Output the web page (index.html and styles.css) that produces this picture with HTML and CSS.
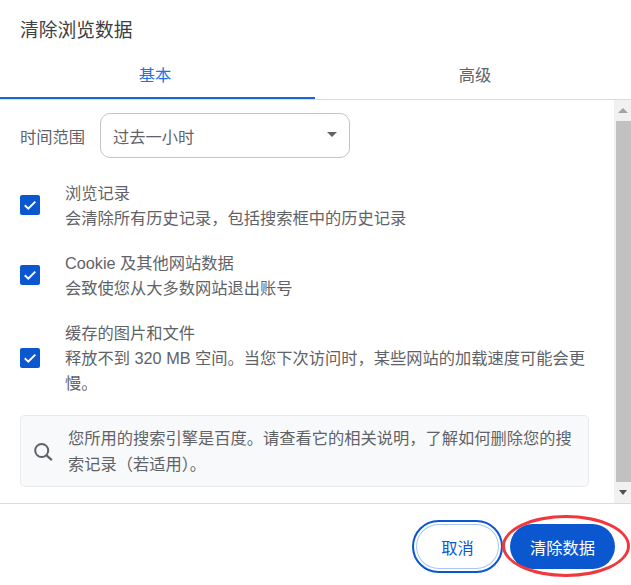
FILE: index.html
```html
<!DOCTYPE html>
<html lang="zh-CN">
<head>
    <meta charset="UTF-8">
    <title>清除浏览数据</title>
    <link rel="stylesheet" href="styles.css">
</head>
<body>
    <div class="dialog">
        <h1 class="title">清除浏览数据</h1>
        <div class="tabs">
            <div class="tab tab-active">基本</div>
            <div class="tab tab-other">高级</div>
        </div>
        <div class="middle">
            <div class="content">
                <div class="range-row">
                    <span class="range-label">时间范围</span>
                    <div class="select">
                        <span>过去一小时</span>
                        <span class="select-arrow"></span>
                    </div>
                </div>
                <div class="check-row">
                    <span class="checkbox">
                        <svg viewBox="0 0 20 20" width="20" height="20"><path d="M4.8 10.2l3.5 3.4 7-7" fill="none" stroke="#fff" stroke-width="2"/></svg>
                    </span>
                    <div class="check-text">
                        <div>浏览记录</div>
                        <div>会清除所有历史记录，包括搜索框中的历史记录</div>
                    </div>
                </div>
                <div class="check-row">
                    <span class="checkbox">
                        <svg viewBox="0 0 20 20" width="20" height="20"><path d="M4.8 10.2l3.5 3.4 7-7" fill="none" stroke="#fff" stroke-width="2"/></svg>
                    </span>
                    <div class="check-text">
                        <div>Cookie 及其他网站数据</div>
                        <div>会致使您从大多数网站退出账号</div>
                    </div>
                </div>
                <div class="check-row">
                    <span class="checkbox">
                        <svg viewBox="0 0 20 20" width="20" height="20"><path d="M4.8 10.2l3.5 3.4 7-7" fill="none" stroke="#fff" stroke-width="2"/></svg>
                    </span>
                    <div class="check-text">
                        <div>缓存的图片和文件</div>
                        <div>释放不到 320 MB 空间。当您下次访问时，某些网站的加载速度可能会更慢。</div>
                    </div>
                </div>
                <div class="notice">
                    <svg class="notice-icon" viewBox="0 0 24 24" width="24" height="24"><circle cx="9.7" cy="11.5" r="6.5" fill="none" stroke="#5f6368" stroke-width="2"/><path d="M14.3 16.1l5.5 5" stroke="#5f6368" stroke-width="2.2"/></svg>
                    <p class="notice-text">您所用的搜索引擎是百度。请查看它的相关说明，了解如何删除您的搜索记录（若适用）。</p>
                </div>
            </div>
            <div class="scrollbar">
                <div class="scroll-btn"><span class="arrow-up"></span></div>
                <div class="scroll-track"><div class="scroll-thumb"></div></div>
                <div class="scroll-btn"><span class="arrow-down"></span></div>
            </div>
        </div>
        <div class="footer">
            <button class="btn btn-cancel">取消</button>
            <button class="btn btn-clear">清除数据</button>
            <span class="red-circle"></span>
        </div>
    </div>
</body>
</html>
```

FILE: styles.css
```css
html, body {
    margin: 0;
    padding: 0;
    background: #fff;
}
body {
    font-family: "Liberation Sans", "Noto Sans CJK SC", sans-serif;
    color: #5f6368;
    font-size: 16.25px;
}
.dialog {
    width: 631px;
    height: 585px;
    display: flex;
    flex-direction: column;
    overflow: hidden;
}
.title {
    margin: 0;
    padding: 18px 20px 0;
    height: 40px;
    box-sizing: content-box;
    font-size: 18.75px;
    line-height: 25px;
    font-weight: 400;
    color: #3c4043;
}
.tabs {
    display: flex;
    height: 41px;
    border-bottom: 1px solid #dadce0;
    box-sizing: content-box;
}
.tab {
    flex: 1;
    text-align: center;
    line-height: 35px;
    color: #5f6368;
}
.tab-active {
    color: #1a73e8;
    border-bottom: 2px solid #1a66d8;
    height: 39px;
    flex: 0 0 310px;
    padding-right: 5px;
}
.tab-other {
    padding-left: 4px;
}
.middle {
    display: flex;
    height: 403px;
}
.content {
    flex: 1;
    padding: 13px 25px 0 20px;
    min-width: 0;
}
.range-row {
    display: flex;
    align-items: center;
    gap: 15px;
}
.select {
    width: 250px;
    height: 45px;
    box-sizing: border-box;
    border: 1px solid #c4c4c4;
    border-radius: 10px;
    padding: 0 12px;
    display: flex;
    align-items: center;
    justify-content: space-between;
}
.select-arrow {
    width: 0;
    height: 0;
    border-left: 5px solid transparent;
    border-right: 5px solid transparent;
    border-top: 5px solid #5f6368;
    margin-top: -3px;
}
.check-row {
    display: flex;
    align-items: center;
    gap: 25px;
    margin-top: 20px;
}
.range-row + .check-row {
    margin-top: 23px;
}
.checkbox {
    flex: none;
    width: 20px;
    height: 20px;
    margin-bottom: 2px;
    border-radius: 2px;
    background: #0b57d0;
    display: flex;
}
.check-text {
    line-height: 25px;
}
.notice {
    margin-top: 19px;
    width: 569px;
    height: 72px;
    box-sizing: border-box;
    background: #f8f9fa;
    border: 1px solid #e8eaed;
    border-radius: 5px;
    display: flex;
    align-items: center;
    padding: 0 10px 0 11px;
    gap: 12px;
}
.notice-icon {
    flex: none;
}
.notice-text {
    margin: 0;
    line-height: 26px;
}
.scrollbar {
    flex: none;
    width: 17px;
    display: flex;
    flex-direction: column;
    background: #f1f1f1;
}
.scroll-btn {
    height: 21px;
    display: flex;
    align-items: center;
    justify-content: center;
}
.arrow-up {
    border-left: 5px solid transparent;
    border-right: 5px solid transparent;
    border-bottom: 5px solid #a3a3a3;
}
.arrow-down {
    border-left: 4.5px solid transparent;
    border-right: 4.5px solid transparent;
    border-top: 5px solid #505050;
}
.scroll-track {
    flex: 1;
    padding: 0 0 0 2px;
}
.scroll-thumb {
    height: 100%;
    background: #c1c1c1;
}
.footer {
    position: relative;
    flex: 1;
    border-top: 1px solid #dadce0;
    display: flex;
    justify-content: flex-end;
    align-items: center;
    padding: 4px 16px 0 0;
    gap: 7px;
}
.btn {
    font: inherit;
    cursor: pointer;
    border-radius: 27px;
}
.btn-cancel {
    width: 91px;
    height: 53px;
    background: #fff;
    color: #0b57d0;
    border: 2px solid #0b57d0;
    box-shadow: inset 0 0 0 2px #fff, inset 0 0 0 3px #a8c7fa;
}
.btn-clear {
    width: 105px;
    height: 45px;
    background: #0b57d0;
    color: #fff;
    border: none;
}
.red-circle {
    position: absolute;
    left: 502px;
    top: 11px;
    width: 128px;
    height: 62px;
    box-sizing: border-box;
    border: 3px solid #f0383c;
    border-radius: 50%;
}
```
